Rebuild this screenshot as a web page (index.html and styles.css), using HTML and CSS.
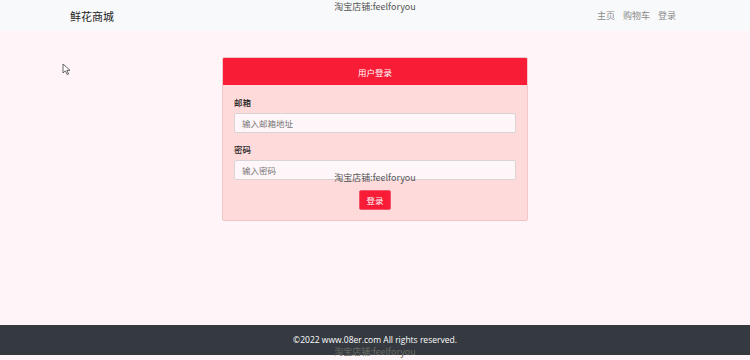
FILE: index.html
```html
<!DOCTYPE html>
<html lang="zh">

<head>
    <meta charset="utf-8">
    <meta name="viewport" content="width=device-width, initial-scale=1.0">
    <title>鲜花商城 - 登录</title>
    <link rel="stylesheet" href="styles.css">
</head>

<body>
    <header class="navbar">
        <div class="brand">鲜花商城</div>
        <nav>
            <a href="#">主页</a>
            <a href="#">购物车</a>
            <a href="#">登录</a>
        </nav>
    </header>

    <main class="page">
        <section class="card">
            <div class="card-header">用户登录</div>
            <form class="card-body">
                <label class="label">邮箱</label>
                <input class="field" type="text" placeholder="输入邮箱地址">
                <label class="label">密码</label>
                <input class="field" type="password" placeholder="输入密码">
                <div class="actions">
                    <button type="button" class="btn">登录</button>
                </div>
            </form>
        </section>
    </main>

    <footer class="footer"><span class="footer-text">©2022 www.08er.com All rights reserved.</span></footer>

    <!-- watermarks -->
    <div class="mark mark-top">淘宝店铺:feelforyou</div>
    <div class="mark mark-mid">淘宝店铺:feelforyou</div>
    <div class="mark mark-bottom">淘宝店铺:feelforyou</div>

    <svg class="cursor" width="10" height="13" viewBox="0 0 10 13">
        <path d="M1 1 L1 10 L3.4 7.8 L5.2 11.6 L6.6 11 L4.9 7.3 L8 7.3 Z" fill="#fff" stroke="#555" stroke-width="0.9" />
    </svg>
</body>

</html>
```

FILE: styles.css
```css
body {
    margin: 0;
    background-color: #fff5f8;
    font-family: "Noto Sans CJK SC", "Liberation Sans", sans-serif;
    height: 360px;
    display: flex;
    flex-direction: column;
    position: relative;
    overflow: hidden;
}

.navbar {
    height: 31px;
    background-color: #f8f9fa;
    display: flex;
    align-items: center;
    justify-content: space-between;
    padding: 0 74px 0 70px;
}

.brand {
    font-size: 11px;
    color: #222;
}

.navbar nav {
    display: flex;
    gap: 8px;
}

.navbar nav a {
    font-size: 9px;
    color: #8a8a8a;
    text-decoration: none;
}

.page {
    flex: 1;
    display: flex;
    justify-content: center;
    align-items: flex-start;
    padding-top: 26px;
}

.card {
    width: 304px;
    background-color: #ffdada;
    border: 1px solid #f3c7c9;
    border-radius: 2px;
    overflow: hidden;
}

.card-header {
    height: 27px;
    background-color: #f81c37;
    color: #fff;
    font-size: 8.5px;
    display: flex;
    align-items: center;
    justify-content: center;
}

.card-body {
    padding: 11px 11px 10px;
    display: flex;
    flex-direction: column;
}

.label {
    font-size: 8.5px;
    color: #222;
    font-weight: 500;
    line-height: 12px;
    margin-bottom: 5px;
}

.field {
    height: 20px;
    box-sizing: border-box;
    border: 1px solid #d8d3d6;
    border-radius: 2px;
    background-color: #fff6f9;
    font-family: inherit;
    font-size: 8.5px;
    padding: 0 7px;
    margin-bottom: 10px;
}

.field::placeholder {
    color: #777;
}

.actions {
    display: flex;
    justify-content: center;
}

.btn {
    width: 32px;
    height: 20px;
    border: 1px solid #f15468;
    border-radius: 2px;
    background-color: #f81c37;
    color: #fff;
    font-family: inherit;
    font-size: 8.5px;
    padding: 0;
}

.footer {
    height: 30px;
    margin-bottom: 5px;
    background-color: #343a40;
    color: #fff;
    font-family: "Open Sans", "Liberation Sans", sans-serif;
    font-size: 8.5px;
    display: flex;
    justify-content: center;
}

.footer-text {
    margin-top: 10px;
    line-height: 10px;
}

.mark {
    position: absolute;
    left: 0;
    right: 0;
    text-align: center;
    font-size: 9px;
    color: #555;
    line-height: 11px;
}

.mark-top {
    top: 1px;
}

.mark-mid {
    top: 172px;
}

.mark-bottom {
    top: 346px;
    color: #6b6b60;
}

.cursor {
    position: absolute;
    left: 62px;
    top: 63px;
}
```
